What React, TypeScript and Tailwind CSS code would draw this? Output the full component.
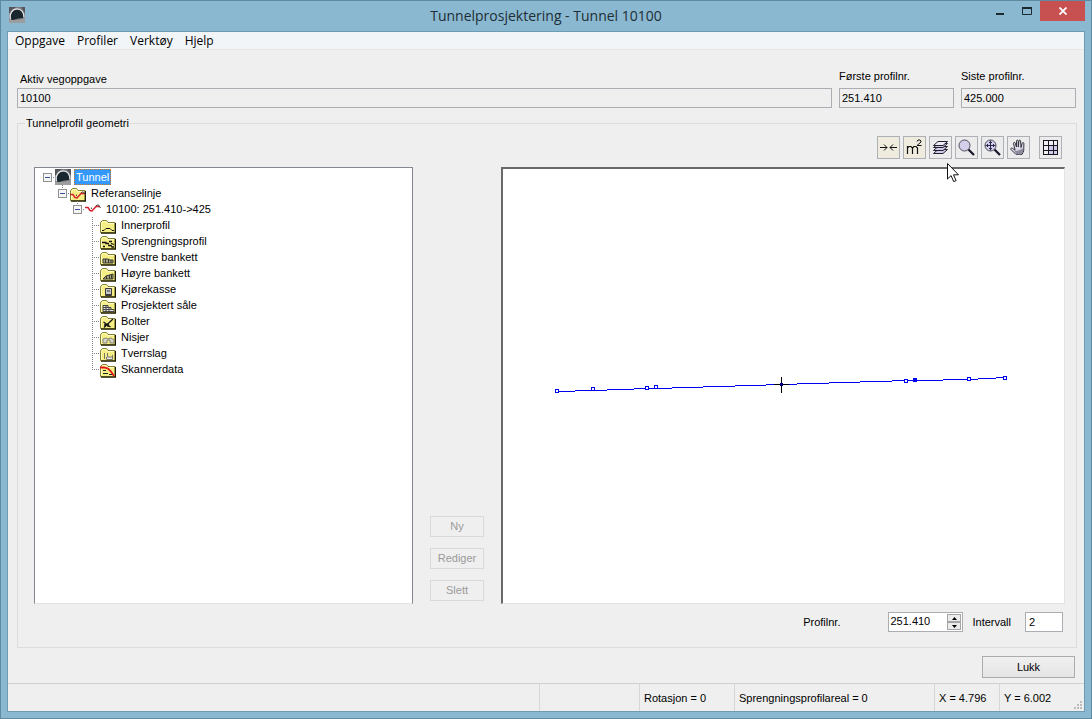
import type { ReactNode } from "react";
import { clsx } from "clsx";

const MENU = ["Oppgave", "Profiler", "Verktøy", "Hjelp"];

const FOLDERS = [
  { label: "Innerprofil", art: <path d="M2 12.500h2l2-2h4l2 2h2" stroke="#111" fill="none" /> },
  {
    label: "Sprengningsprofil",
    art: <path d="M2 8.500h4v1h3M9 7.500h3M3 12.500h2M8 11.500h3l1 1.500h2M11 9.500l3 1" stroke="#111" strokeWidth="1.300" fill="none" />,
  },
  {
    label: "Venstre bankett",
    art: <path d="M3 13V9h5l2 1h3v3z M5.500 9v4 M8.500 9v4 M11 10v3" stroke="#3b3b2c" fill="#a5a38c" />,
  },
  {
    label: "Høyre bankett",
    art: <path d="M3 13l3-3 7-2v5z M6.500 10v3 M9.500 9v4 M11.500 9v4" stroke="#3b3b2c" fill="#a5a38c" />,
  },
  {
    label: "Kjørekasse",
    art: <path d="M5.500 6.500h6v7h-6z M7 9h3 M6 12.500h5" stroke="#3b3836" fill="#c6c8cf" />,
  },
  {
    label: "Prosjektert såle",
    art: <path d="M3 7.500h5v2h3v2h3v2H3z M3 9.500h6 M3 11.500h9 M6 8v5 M9 10v3" stroke="#444" fill="#e9e9df" />,
  },
  {
    label: "Bolter",
    art: <path d="M3.500 8l7 5 M13 5l-9 8.500 M8 9v4 M4 11h5" stroke="#151515" strokeWidth="1.300" fill="none" />,
  },
  {
    label: "Nisjer",
    art: <path d="M3 13V9l3-1 2 1 3-1 3 2v3h-4V10H7v3z" stroke="#85837b" fill="#d9d6c5" />,
  },
  {
    label: "Tverrslag",
    art: <path d="M4.500 7v6 M7.500 7v4h5v2.500h-6V11 M12.500 9v3" stroke="#77766e" fill="#eeeadb" />,
  },
  {
    label: "Skannerdata",
    art: (
      <>
        <path d="M3 11.500h5M9 12.500h4M3 8.500h3" stroke="#222" />
        <path d="M0 5.500h4l4 1 3 3 3 4.500" stroke="#e3151b" strokeWidth="1.800" fill="none" />
      </>
    ),
  },
];

const POINTS = [
  { x: 54, y: 222 },
  { x: 90, y: 220 },
  { x: 144, y: 219 },
  { x: 153, y: 218 },
  { x: 403, y: 212 },
  { x: 412, y: 211, filled: true },
  { x: 466, y: 210 },
  { x: 502, y: 209 },
];

const STATUS = [
  { text: "", width: "flex-1" },
  { text: "", width: "w-[100px]" },
  { text: "Rotasjon = 0", width: "w-[95px]" },
  { text: "Sprengningsprofilareal = 0", width: "w-[200px]" },
  { text: "X = 4.796", width: "w-[65px]" },
  { text: "Y = 6.002", width: "w-[85px]" },
];

function TunnelIcon() {
  return (
    <svg viewBox="0 0 16 16" className="size-4 shrink-0" aria-hidden="true">
      <path d="M0 0h16v16H0z" fill="#7b7a80" />
      <path d="M0 0h7L1 6H0zM12 0h4v6z" fill="#56555b" />
      <path d="M0 13l3-2 5 2 8-2v5H0z" fill="#9b9d9f" />
      <path d="M2.500 13C.5 7 4 2.500 8 2.500s6.500 3.500 6.500 8.500L9 11.500 4.500 13z" fill="#1a262d" />
      <path d="M1.500 12C0 6.500 3.500 1.800 8 1.800s7 3.700 7 8.700" stroke="#dfe3e4" strokeWidth="1.300" fill="none" />
    </svg>
  );
}

function FolderIcon({ children }: { children?: ReactNode }) {
  return (
    <svg viewBox="0 0 16 16" className="relative top-px size-4 shrink-0" aria-hidden="true">
      <path d="M.5 14.500V4.500l2-2h4l1.500 2h7v10z" fill="#f5ee84" stroke="#85802c" />
      <path d="M1.500 13V5.500L3 3.500h3l1.500 2H14" stroke="#fffcc9" fill="none" />
      <path d="M1 15.200h14.500V5" stroke="#1b1905" strokeWidth="1.300" fill="none" />
      {children}
    </svg>
  );
}

function LineArt({ y = 0 }: { y?: number }) {
  return (
    <g transform={`translate(0 ${y})`}>
      <path d="M0 6.500h3l2 3 2 .5 4-4.500h4" stroke="#d2202f" strokeWidth="1.500" fill="none" />
      <path d="M6.500 8V6.500M11 5l1-1h1.500L15.500 7" stroke="#57434a" fill="none" />
    </g>
  );
}

// dotted connector to the left of a row, with room for the expander box
function Branch({ open, first, last }: { open?: boolean; first?: boolean; last?: boolean }) {
  return (
    <span className="relative h-4 w-3 shrink-0">
      <svg viewBox="0 0 12 16" className="h-4 w-3" shapeRendering="crispEdges" aria-hidden="true">
        <path
          d={clsx(!first && "M4.500 0V8", !last && !first && !open && "M4.500 8V16", "M4 8.500H12")}
          stroke="#808080"
          strokeDasharray="1 1"
          fill="none"
        />
      </svg>
      {open && (
        <button
          type="button"
          aria-label="Skjul"
          className="absolute top-1 left-0 flex size-[9px] items-center justify-center border border-[#919191] bg-[#f6f6f6]"
        >
          <span className="h-px w-[5px] bg-[#3c4f9c]" />
        </button>
      )}
    </span>
  );
}

function ToolButton({ label, className, children }: { label: string; className?: string; children: ReactNode }) {
  return (
    <button
      type="button"
      aria-label={label}
      className={clsx("flex size-[23px] items-center justify-center border border-[#adb0b4]", className ?? "bg-[#ececec]")}
    >
      {children}
    </button>
  );
}

function ReadonlyField({ id, label, value, labelClass }: { id: string; label: string; value: string; labelClass: string }) {
  return (
    <div className="flex min-w-0 flex-col">
      <label htmlFor={id} className={clsx("leading-4", labelClass)}>
        {label}
      </label>
      <input id={id} readOnly value={value} className="h-5 w-full border border-[#abadb3] bg-[#efefef] px-[2px]" />
    </div>
  );
}

function TitleBar() {
  return (
    <header className="relative flex h-[30px] shrink-0 justify-center">
      <span className="absolute top-[6px] left-2">
        <TunnelIcon />
      </span>
      <h1 className="font-['Open_Sans',sans-serif] text-[14px] leading-[30px] text-[#1f2e36]">Tunnelprosjektering - Tunnel 10100</h1>
      <div className="absolute top-0 right-[6px] flex h-5">
        <button type="button" aria-label="Minimer" className="flex w-[27px] items-center justify-center">
          <svg viewBox="0 0 12 12" className="size-3" aria-hidden="true">
            <path d="M2 8h8v2H2z" fill="#1c2930" />
          </svg>
        </button>
        <button type="button" aria-label="Maksimer" className="flex w-[27px] items-center justify-center">
          <svg viewBox="0 0 12 12" className="size-3" aria-hidden="true">
            <path d="M1.500 3h9v6.500h-9z" fill="none" stroke="#1c2930" />
            <path d="M1 2h10v2H1z" fill="#1c2930" />
          </svg>
        </button>
        <button type="button" aria-label="Lukk vindu" className="flex w-[45px] items-center justify-center bg-[#c75050]">
          <svg viewBox="0 0 8 8" className="size-2" aria-hidden="true">
            <path d="M.5.5l7 7M7.500.5l-7 7" stroke="#fff" strokeWidth="1.800" />
          </svg>
        </button>
      </div>
    </header>
  );
}

function Toolbar() {
  return (
    <div className="mr-[3px] flex justify-end gap-[3px]">
      <ToolButton label="Sentrer" className="bg-[#efebdf]">
        <svg viewBox="0 0 17 17" className="size-[17px]" aria-hidden="true">
          <path d="M0 8.500h7M4 5.500l3 3-3 3M17 8.500h-7M13 5.500l-3 3 3 3" stroke="#111" fill="none" />
        </svg>
      </ToolButton>
      <ToolButton label="Areal" className="bg-[#efebdf]">
        <svg viewBox="0 0 17 17" className="size-[17px]" aria-hidden="true">
          <path d="M1.500 15V7M1.500 9l1.500-1.500h2L6.500 9v6M6.500 9L8 7.500h2L11.500 9v6" stroke="#111" strokeWidth="1.200" fill="none" />
          <path d="M11 2.500L12 1h2l1 1v1l-4 3.500h4.500" stroke="#111" fill="none" />
        </svg>
      </ToolButton>
      <div className="relative">
        <ToolButton label="Lag">
          <svg viewBox="0 0 17 17" className="size-[17px]" aria-hidden="true">
            <g fill="#d0cbe8" stroke="#20202e" strokeLinejoin="round">
              <path d="M1.500 14.500l4.500-4h9.500l-4.500 4z" />
              <path d="M1.500 11.500l4.500-4h9.500l-4.500 4z" />
              <path d="M1.500 8.500l4.500-4h9.500l-4.500 4z" />
              <path d="M1.500 6.500l4.500-4h9.500l-4.500 4z" fill="#efedf8" />
            </g>
          </svg>
        </ToolButton>
        <svg viewBox="0 0 12 20" className="pointer-events-none absolute top-[27px] left-[18px] z-10 h-5 w-3" aria-hidden="true">
          <path d="M.5.5v15.500l3.600-3.400 2.600 6 2.400-1-2.600-5.800h5z" fill="#fff" stroke="#111" />
        </svg>
      </div>
      <ToolButton label="Zoom">
        <svg viewBox="0 0 17 17" className="size-[17px]" aria-hidden="true">
          <circle cx="6.500" cy="6.500" r="5.500" fill="#d4cfeb" stroke="#4b4b58" />
          <path d="M10.500 10.500l5.500 5.500" stroke="#17172a" strokeWidth="2.200" />
        </svg>
      </ToolButton>
      <ToolButton label="Zoom alt">
        <svg viewBox="0 0 17 17" className="size-[17px]" aria-hidden="true">
          <circle cx="6.500" cy="6.500" r="5.500" fill="#d4cfeb" stroke="#4b4b58" />
          <path d="M6.500 1.500v10M1.500 6.500h10M5 3.500h3M5 9.500h3M3.500 5v3M9.500 5v3" stroke="#29294a" />
          <path d="M10.500 10.500l5.500 5.500" stroke="#17172a" strokeWidth="2.200" />
        </svg>
      </ToolButton>
      <ToolButton label="Panorer">
        <svg viewBox="0 0 17 17" className="size-[17px]" aria-hidden="true">
          <path
            d="M6 15.500L1 10.500c-.8-1 .4-2 1.400-1.200L5 11 3.500 4.500c-.2-1.300 1.300-1.600 1.700-.4L6.500 8V2.200c0-1.400 1.700-1.400 1.800 0V8l.5-6c.1-1.200 1.700-1.200 1.800 0L11 8.500l1.200-4.300c.4-1.200 1.900-.7 1.700.5L13.700 12l-1.700 3.500z"
            fill="#d9d7e4"
            stroke="#34343f"
          />
          <path d="M4 11l3 1 5-2 1.500-1.500-.3 3.500-1.700 3.500H6.500z" fill="#8d8a9e" />
        </svg>
      </ToolButton>
      <ToolButton label="Rutenett" className="ml-[6px] bg-[#ececec]">
        <svg viewBox="0 0 17 17" className="size-[17px]" shapeRendering="crispEdges" aria-hidden="true">
          <path d="M1 1h15v15H1z" fill="#f0eff6" />
          <path d="M6 6h5v5H6zM11 11h5v5h-5zM11 6h5v5h-5zM6 11h5v5H6z" fill="#d0cbea" />
          <path d="M1.500 1.500h14v14h-14zM6.500 1v15M11.500 1v15M1 6.500h15M1 11.500h15" stroke="#16161c" fill="none" />
        </svg>
      </ToolButton>
    </div>
  );
}

function Tree() {
  return (
    <div className="border border-[#828790] border-b-[#e3e3e3] bg-white pt-px pl-2">
      <ul role="tree">
        <li role="treeitem">
          <div className="flex h-4">
            <Branch open first />
            <TunnelIcon />
            <span className="ml-[3px] border border-dotted border-[#d87a1a] bg-[#3399ff] px-px leading-[14px] text-white">Tunnel</span>
          </div>
          <ul role="group" className="pl-[15px]">
            <li role="treeitem">
              <div className="flex h-4">
                <Branch open />
                <FolderIcon>
                  <LineArt y={2} />
                </FolderIcon>
                <span className="ml-[3px] px-[2px] leading-4">Referanselinje</span>
              </div>
              <ul role="group" className="pl-[15px]">
                <li role="treeitem">
                  <div className="flex h-4">
                    <Branch open />
                    <svg viewBox="0 0 16 16" className="size-4 shrink-0" aria-hidden="true">
                      <LineArt />
                    </svg>
                    <span className="ml-[3px] px-[2px] leading-4">10100: 251.410-&gt;425</span>
                  </div>
                  <ul role="group" className="pl-[15px]">
                    {FOLDERS.map((folder, i) => (
                      <li key={folder.label} role="treeitem" className="flex h-4">
                        <Branch last={i === FOLDERS.length - 1} />
                        <FolderIcon>{folder.art}</FolderIcon>
                        <span className="ml-[3px] px-[2px] leading-4">{folder.label}</span>
                      </li>
                    ))}
                  </ul>
                </li>
              </ul>
            </li>
          </ul>
        </li>
      </ul>
    </div>
  );
}

function Plot() {
  return (
    <div className="min-w-0 border-t-2 border-r border-b border-l-2 border-t-[#696969] border-r-[#e3e3e3] border-b-[#e3e3e3] border-l-[#696969] bg-white">
      <svg viewBox="0 0 561 434" className="h-full w-full" shapeRendering="crispEdges" role="img" aria-label="Referanselinje">
        <path
          d="M54 222.500H72M72 221.500H104M104 220.500H131M131 219.500H169M169 218.500H200M200 217.500H232M232 216.500H263M263 215.500H294M294 214.500H326M326 213.500H357M357 212.500H389M389 211.500H440M440 210.500H475M475 209.500H493M493 208.500H502"
          stroke="#0000f0"
          fill="none"
        />
        {POINTS.map((p) => (
          <rect key={p.x} x={p.x - 1.5} y={p.y - 1.5} width="3" height="3" fill={p.filled ? "#0000f0" : "#fff"} stroke="#0000f0" />
        ))}
        <path d="M278.500 208v16M271 215.500h15" stroke="#000" />
        <path d="M277 214h3v3h-3z" fill="#000080" />
      </svg>
    </div>
  );
}

function SpinnerField() {
  return (
    <div className="flex h-5 w-[75px] border border-[#abadb3] bg-white">
      <input id="profilnr" defaultValue="251.410" className="min-w-0 flex-1 pb-[2px] pl-px" />
      <div className="my-px mr-px flex w-[14px] flex-col">
        <button type="button" aria-label="Opp" className="flex flex-1 items-center justify-center border border-[#a5a5a5] bg-[#ececec]">
          <svg viewBox="0 0 5 3" className="h-[3px] w-[5px]" aria-hidden="true">
            <path d="M0 3l2.500-3L5 3z" />
          </svg>
        </button>
        <button type="button" aria-label="Ned" className="flex flex-1 items-center justify-center border border-[#a5a5a5] bg-[#ececec]">
          <svg viewBox="0 0 5 3" className="h-[3px] w-[5px]" aria-hidden="true">
            <path d="M0 0l2.500 3L5 0z" />
          </svg>
        </button>
      </div>
    </div>
  );
}

export default function App() {
  return (
    <div className="flex min-h-screen flex-col border border-[#5f8aa0] bg-[#89b8d0] font-['Liberation_Sans',Arial,sans-serif] text-[11px] text-black">
      <TitleBar />
      <div className="mx-[6px] mb-[6px] flex flex-1 flex-col border-x border-b border-[#6c9bb2] bg-[#efefef]">
        <nav className="flex h-[19px] gap-3 border-t border-b border-t-[#6c9bb2] border-b-[#e6e6e6] bg-[#f1f5f8] pl-[7px] font-['Open_Sans',sans-serif] text-[12px]">
          {MENU.map((item) => (
            <button key={item} type="button" className="leading-[18px]">
              {item}
            </button>
          ))}
        </nav>

        <main className="flex flex-1 flex-col pt-[18px] pr-[7px] pl-[9px]">
          <div className="mr-px grid grid-cols-[1fr_115px_115px] items-end gap-x-[7px]">
            <ReadonlyField id="oppgave" label="Aktiv vegoppgave" value="10100" labelClass="mb-px pl-[3px]" />
            <ReadonlyField id="forste" label="Første profilnr." value="251.410" labelClass="mb-1" />
            <ReadonlyField id="siste" label="Siste profilnr." value="425.000" labelClass="mb-1" />
          </div>

          <fieldset className="mt-[7px] flex min-w-0 flex-1 flex-col border border-[#dcdcdc] pt-[5px] pr-[11px] pb-[15px] pl-4">
            <legend className="-ml-[9px] px-px leading-4">Tunnelprofil geometri</legend>
            <Toolbar />
            <div className="mt-2 grid flex-1 grid-cols-[379fr_54px_564fr] gap-x-[17px]">
              <Tree />
              <div className="flex flex-col justify-end gap-[11px] pb-[3px]">
                {["Ny", "Rediger", "Slett"].map((label) => (
                  <button key={label} type="button" disabled className="h-[21px] border border-[#d9d9d9] text-[#9a9a9a]">
                    {label}
                  </button>
                ))}
              </div>
              <Plot />
            </div>
            <div className="mt-2 mr-[2px] flex h-5 items-center justify-end">
              <label htmlFor="profilnr" className="mr-12">
                Profilnr.
              </label>
              <SpinnerField />
              <label htmlFor="intervall" className="mr-[14px] ml-[9px]">
                Intervall
              </label>
              <input id="intervall" defaultValue="2" className="h-5 w-[38px] border border-[#abadb3] bg-white px-[3px]" />
            </div>
          </fieldset>

          <button
            type="button"
            className="mt-2 mr-[2px] mb-[5px] h-[22px] w-[93px] self-end border border-[#acacac] bg-gradient-to-b from-[#f0f0f0] to-[#e5e5e5]"
          >
            Lukk
          </button>
        </main>

        <footer className="relative flex h-7 border-t border-[#d0d0d0]">
          {STATUS.map((cell, i) => (
            <div key={i} className={clsx("border-[#d7d7d7] pl-1 leading-7", i > 0 && "border-l", cell.width)}>
              {cell.text}
            </div>
          ))}
          <svg viewBox="0 0 10 10" className="absolute right-px bottom-px size-[10px]" shapeRendering="crispEdges" aria-hidden="true">
            <path d="M7 1h2v2H7zM4 4h2v2H4zM7 4h2v2H7zM1 7h2v2H1zM4 7h2v2H4zM7 7h2v2H7z" fill="#bcbcbc" />
          </svg>
        </footer>
      </div>
    </div>
  );
}
